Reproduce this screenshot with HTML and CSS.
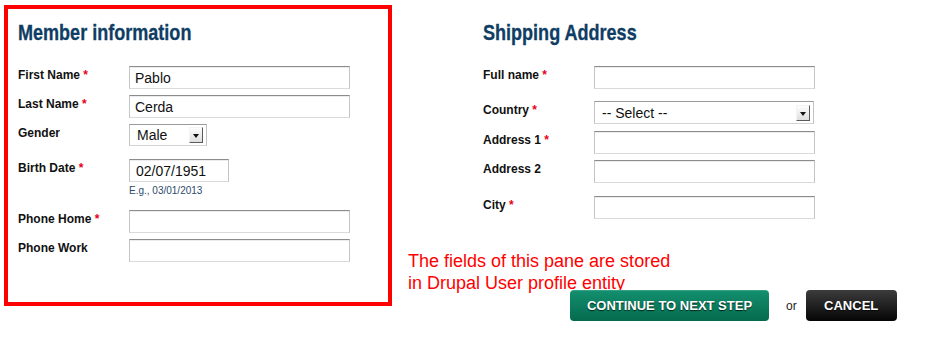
FILE: index.html
```html
<!DOCTYPE html>
<html>
<head>
<meta charset="utf-8">
<link rel="stylesheet" href="styles.css">
</head>
<body>
<div class="page">
  <section class="member">
    <h2 class="pane-title"><span class="title-text">Member information</span></h2>
    <div class="field f1">
      <label>First Name <span class="req">*</span></label>
      <input class="text" type="text" value="Pablo">
    </div>
    <div class="field f2">
      <label>Last Name <span class="req">*</span></label>
      <input class="text" type="text" value="Cerda">
    </div>
    <div class="field f3">
      <label>Gender</label>
      <div class="select gender"><span class="sel-text">Male</span><span class="arrow"></span></div>
    </div>
    <div class="field f4">
      <label>Birth Date <span class="req">*</span></label>
      <div class="control">
        <input class="text date" type="text" value="02/07/1951">
        <div class="hint">E.g., 03/01/2013</div>
      </div>
    </div>
    <div class="field f5">
      <label>Phone Home <span class="req">*</span></label>
      <input class="text" type="text" value="">
    </div>
    <div class="field f6">
      <label>Phone Work</label>
      <input class="text" type="text" value="">
    </div>
  </section>
  <div class="right">
    <section class="shipping">
      <h2 class="pane-title"><span class="title-text">Shipping Address</span></h2>
      <div class="field s1">
        <label>Full name <span class="req">*</span></label>
        <input class="text" type="text" value="">
      </div>
      <div class="field s2">
        <label>Country <span class="req">*</span></label>
        <div class="select country"><span class="sel-text">-- Select --</span><span class="arrow"></span></div>
      </div>
      <div class="field s3">
        <label>Address 1 <span class="req">*</span></label>
        <input class="text" type="text" value="">
      </div>
      <div class="field s4">
        <label>Address 2</label>
        <input class="text" type="text" value="">
      </div>
      <div class="field s5">
        <label>City <span class="req">*</span></label>
        <input class="text" type="text" value="">
      </div>
    </section>
    <p class="note">The fields of this pane are stored<br>in Drupal User profile entity</p>
    <div class="actions">
      <button class="btn continue">Continue to next step</button>
      <span class="or">or</span>
      <button class="btn cancel">Cancel</button>
    </div>
  </div>
</div>
</body>
</html>
```
FILE: styles.css
```css
html, body {
  margin: 0;
  padding: 0;
  background: #fff;
}
body {
  font-family: "Liberation Sans", Arial, Helvetica, sans-serif;
  color: #111;
}
.page {
  display: flex;
  align-items: flex-start;
  padding: 5px 0 0 4px;
}
.member {
  box-sizing: border-box;
  width: 388px;
  height: 301px;
  border: 4px solid #ff0000;
  padding: 0 0 0 10px;
}
.pane-title {
  margin: 0;
  font-family: "Liberation Sans", Arial, sans-serif;
  font-weight: bold;
  font-size: 22px;
  line-height: 24px;
  color: #0f3d64;
  height: 24px;
  white-space: nowrap;
}
.title-text {
  display: inline-block;
  transform: scaleX(0.82);
  transform-origin: 0 50%;
  -webkit-text-stroke: 0.3px #0f3d64;
}
.member .pane-title {
  margin-top: 12px;
  margin-bottom: 21px;
}
.right {
  display: flex;
  flex-direction: column;
  margin-left: 16px;
}
.shipping {
  padding-left: 75px;
}
.shipping .pane-title {
  margin-top: 16px;
  margin-bottom: 21px;
}
.field {
  display: flex;
  align-items: flex-start;
}
.field label {
  display: block;
  width: 111px;
  flex: none;
  padding-top: 2px;
  font-size: 12px;
  line-height: 14px;
  font-weight: bold;
  color: #111;
}
.shipping .field label {
  width: 111px;
}
.req {
  color: #e8001c;
}
.text {
  box-sizing: border-box;
  display: block;
  width: 221px;
  height: 23px;
  margin: 0;
  padding: 0 5px;
  border: 1px solid;
  border-color: #8c8c8c #c4c4c4 #dadada #c4c4c4;
  box-shadow: inset 0 1px 0 #ececec;
  background: #fff;
  font-family: "Liberation Sans", Arial, sans-serif;
  font-size: 14px;
  color: #111;
  outline: none;
}
.text.date {
  width: 100px;
  padding-left: 6px;
}
.hint {
  margin-top: 3px;
  font-size: 10px;
  line-height: 12px;
  color: #2c4a6c;
}
.f2 { margin-top: 6px; }
.f3 { margin-top: 6px; }
.f4 { margin-top: 13px; }
.f5 { margin-top: 13px; }
.f6 { margin-top: 6px; }
.s2 { margin-top: 12px; }
.s3 { margin-top: 7px; }
.s4 { margin-top: 6px; }
.s5 { margin-top: 13px; }

.select {
  box-sizing: border-box;
  display: flex;
  align-items: center;
  height: 23px;
  border: 1px solid;
  border-color: #9a9a9a #c4c4c4 #d4d4d4 #c4c4c4;
  background: #fff;
  font-size: 14px;
  color: #111;
  padding-left: 7px;
  padding-right: 3px;
}
.select.gender {
  width: 78px;
  height: 22px;
}
.select.country {
  width: 220px;
}
.sel-text {
  flex: 1;
  line-height: 16px;
}
.arrow {
  position: relative;
  box-sizing: border-box;
  width: 14px;
  height: 16px;
  background: linear-gradient(#fdfdfd, #dedede);
  border: 1px solid;
  border-color: #f4f4f4 #5a5a5a #5a5a5a #f4f4f4;
}
.arrow::after {
  content: "";
  position: absolute;
  left: 3px;
  top: 6px;
  border-left: 3px solid transparent;
  border-right: 3px solid transparent;
  border-top: 4px solid #111;
}
.note {
  margin: 31px 0 0 0;
  font-size: 18px;
  line-height: 22px;
  color: #ff0000;
}
.actions {
  display: flex;
  align-items: center;
  margin-top: -4px;
  margin-left: 162px;
}
.btn {
  box-sizing: border-box;
  height: 31px;
  border: none;
  border-radius: 4px;
  margin: 0;
  padding: 0;
  font-family: "Liberation Sans", Arial, sans-serif;
  font-weight: bold;
  font-size: 13px;
  text-transform: uppercase;
  color: #fff;
  text-shadow: 0 1px 1px rgba(0, 0, 0, 0.7);
  cursor: pointer;
}
.continue {
  width: 199px;
  background: linear-gradient(#13906f, #056a4d);
  box-shadow: inset 0 1px 0 rgba(255, 255, 255, 0.15);
}
.cancel {
  width: 91px;
  background: linear-gradient(#3c3c3c, #050505);
}
.or {
  margin: 0 9px 0 17px;
  font-size: 12px;
  color: #222;
}
```
